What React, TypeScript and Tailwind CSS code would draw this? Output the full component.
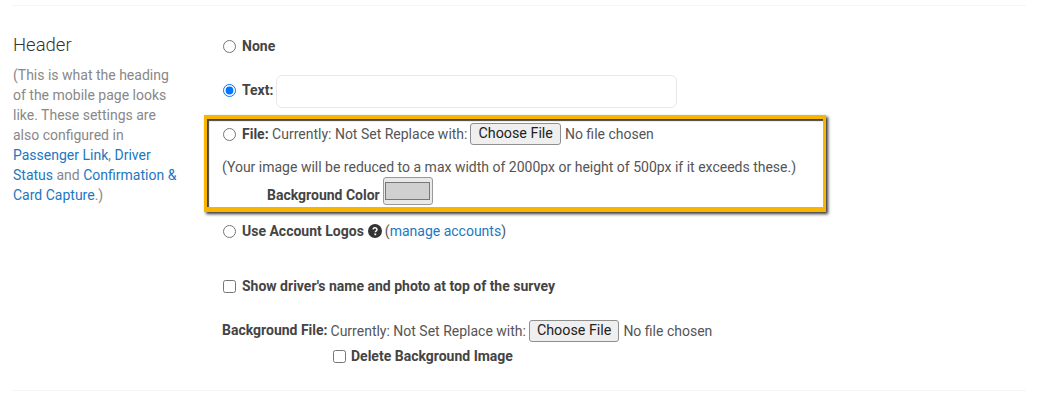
const font = { fontFamily: "Roboto, sans-serif" }

function Radio({ checked = false }: { checked?: boolean }) {
  return <input type="radio" readOnly checked={checked} className="m-0 h-[13px] w-[13px] shrink-0" />
}

function Check() {
  return <input type="checkbox" readOnly className="m-0 h-[13px] w-[13px] shrink-0" />
}

function FileButton() {
  return (
    <span className="ml-[3px] flex h-[22px] items-center rounded-[3px] border border-[#8f8f8f] bg-[#efefef] px-[7px] text-[14.3px] text-[#222]">
      Choose File
    </span>
  )
}

export default function App() {
  return (
    <div style={font} className="h-[402px] w-[1038px] overflow-hidden bg-white text-[14px] text-[#555]">
      <div className="mx-3 mt-[5px] flex h-[386px] border-y border-[#f5f5f5]">
        <div className="w-[166px] pt-[27px] pl-px">
          <h3 className="text-[18.5px] leading-6 font-light text-[#333]">Header</h3>
          <p className="mt-[8px] text-[14px] leading-5 text-[#888]">
            (This is what the heading of the mobile page looks like. These settings are also configured in{" "}
            <a className="text-[#2277c2]">Passenger Link</a>, <a className="text-[#2277c2]">Driver Status</a> and{" "}
            <a className="text-[#2277c2]">Confirmation &amp; Card Capture</a>.)
          </p>
        </div>
        <div className="ml-[44px] flex-1">
          <div className="mt-[32px] flex h-[16px] items-center gap-[6px] pl-[1px]">
            <Radio />
            <b className="font-bold text-[#444]">None</b>
          </div>
          <div className="mt-[21px] flex h-[33px] items-center pl-[1px]">
            <div className="mb-[3px] flex items-center gap-[6px]">
              <Radio checked />
              <b className="font-bold text-[#444]">Text:</b>
            </div>
            <span className="ml-[3px] h-[33px] w-[401px] rounded-[6px] border border-[#e8e8e8] bg-white" />
          </div>
          <div className="mt-[7px] -ml-[18px] h-[97px] w-[622px] border-x-[3px] border-t-[4px] border-b-[5px] border-[#f7b500] pl-[15px] shadow-[inset_2px_2px_1px_#444,2px_2px_3px_#333]">
            <div className="mt-[4px] flex h-[22px] items-center pl-[1px]">
              <Radio />
              <span className="ml-[6px]">
                <b className="font-bold text-[#444]">File:</b> Currently: Not Set Replace with:
              </span>
              <FileButton />
              <span className="ml-[4px]">No file chosen</span>
            </div>
            <p className="mt-[11px] leading-[22px]">
              (Your image will be reduced to a max width of 2000px or height of 500px if it exceeds these.)
            </p>
            <div className="-mt-px flex h-[28px] items-end pl-[45px]">
              <b className="font-bold leading-5 text-[#444]">Background Color</b>
              <span className="ml-[3px] flex h-[28px] w-[50px] items-center justify-center rounded-[3px] border border-[#999] bg-[#e9e9e9]">
                <span className="block h-[18px] w-[45px] border border-[#777] bg-[#d0d0d0]" />
              </span>
            </div>
          </div>
          <div className="mt-[10px] flex h-[18px] items-center gap-[6px] pl-[1px]">
            <Radio />
            <b className="font-bold text-[#444]">Use Account Logos</b>
            <svg viewBox="0 0 24 24" className="-ml-[2px] h-[14px] w-[14px]">
              <circle cx="12" cy="12" r="12" fill="#333" />
              <path d="M8.6 9.2a3.5 3.5 0 0 1 6.9.4c0 2.3-3 2.5-3 4.6" fill="none" stroke="#fff" strokeWidth="2.6" />
              <rect x="11" y="16.2" width="3" height="3" fill="#fff" />
            </svg>
            <span className="-ml-[3px]">
              (<a className="text-[#2277c2]">manage accounts</a>)
            </span>
          </div>
          <div className="mt-[36px] flex h-[20px] items-center gap-[6px] pl-[1px]">
            <Check />
            <b className="font-bold text-[#444]">Show driver's name and photo at top of the survey</b>
          </div>
          <div className="mt-[24px] flex h-[22px] items-center">
            <b className="-mt-px font-bold text-[#444]">Background File:</b>
            <span className="mt-px ml-[3px]">Currently: Not Set Replace with:</span>
            <FileButton />
            <span className="ml-[4px]">No file chosen</span>
          </div>
          <div className="mt-[4px] flex h-[20px] items-center gap-[5px] pl-[111px]">
            <Check />
            <b className="font-bold text-[#444]">Delete Background Image</b>
          </div>
        </div>
      </div>
    </div>
  )
}
